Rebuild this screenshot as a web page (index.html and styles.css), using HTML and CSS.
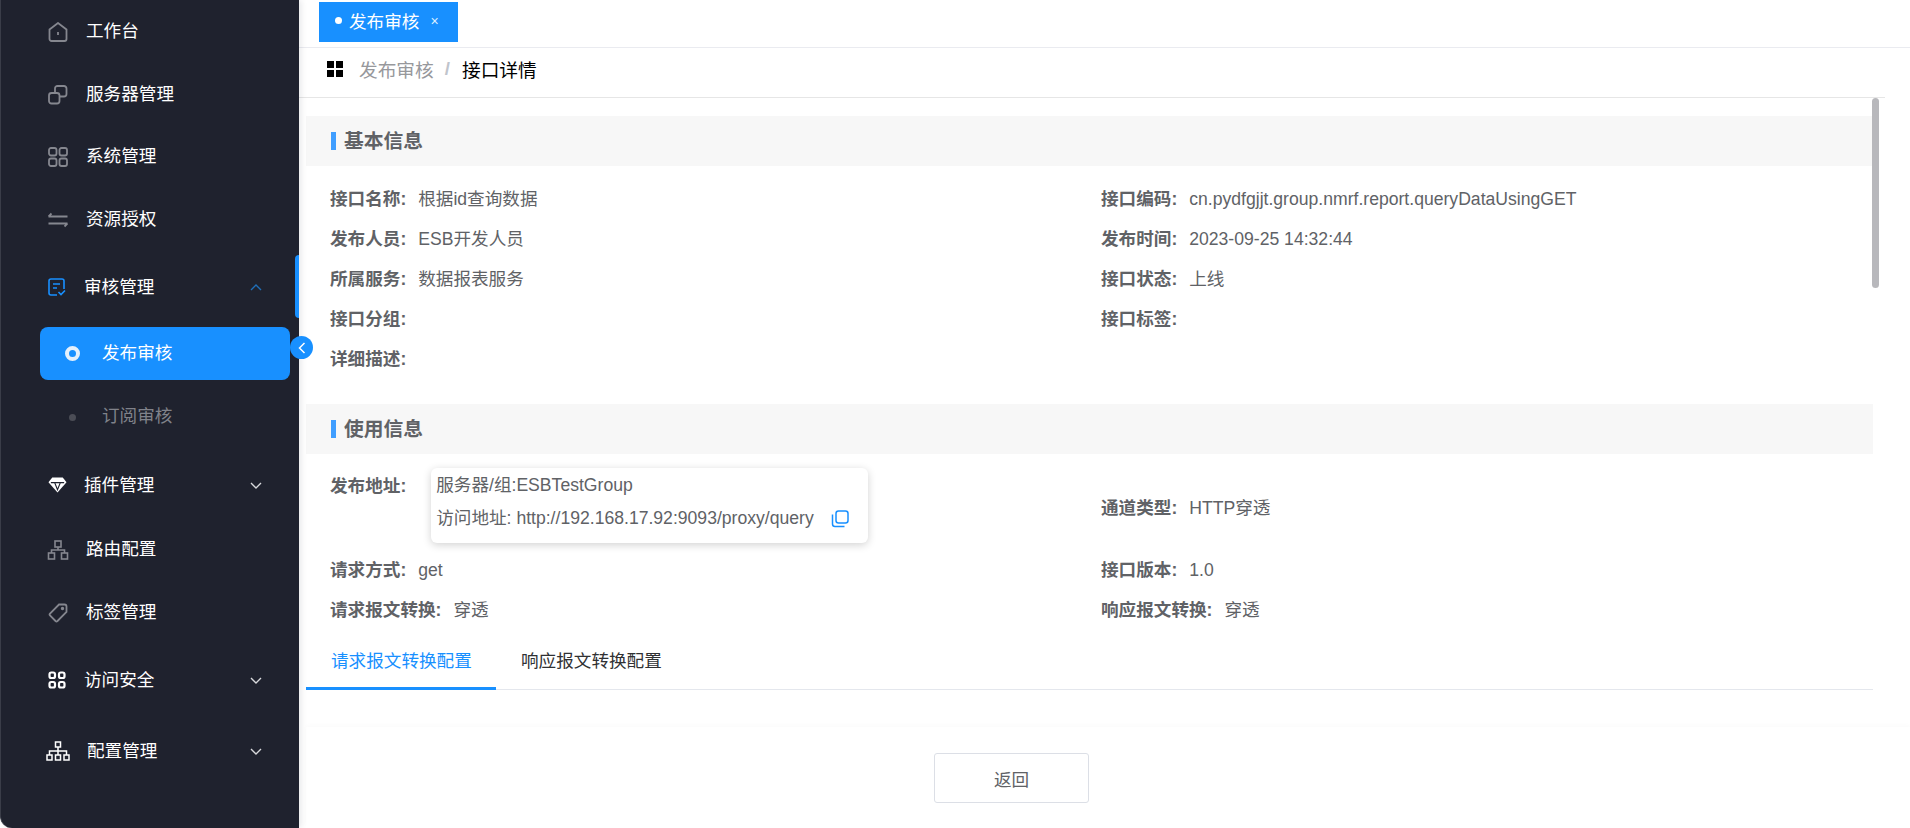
FILE: index.html
```html
<!DOCTYPE html>
<html lang="zh-CN">
<head>
    <meta charset="UTF-8">
    <meta name="viewport" content="width=device-width, initial-scale=1.0">
    <title>接口详情</title>
    <link rel="stylesheet" href="styles.css">
</head>
<body>
    <aside class="sidebar">
        <a class="menu-item">
            <svg class="menu-icon" viewBox="0 0 20 20"><path d="M1.500 7.500 10 1l8.500 6.500V17a2 2 0 0 1-2 2h-13a2 2 0 0 1-2-2z"/><path d="M10 10v3"/></svg>
            <span>工作台</span>
        </a>
        <a class="menu-item">
            <svg class="menu-icon" viewBox="0 0 20 20"><rect x="1" y="8" width="10.500" height="10.500" rx="2.500"/><path d="M7 8V3.500A2.500 2.500 0 0 1 9.500 1H16a2.500 2.500 0 0 1 2.500 2.500V9a2.500 2.500 0 0 1-2.500 2.500h-4.500"/></svg>
            <span>服务器管理</span>
        </a>
        <a class="menu-item">
            <svg class="menu-icon" viewBox="0 0 20 20"><rect x="1" y="1" width="7.500" height="7.500" rx="2"/><rect x="11.500" y="1" width="7.500" height="7.500" rx="2"/><rect x="1" y="11.500" width="7.500" height="7.500" rx="2"/><rect x="11.500" y="11.500" width="7.500" height="7.500" rx="2"/></svg>
            <span>系统管理</span>
        </a>
        <a class="menu-item">
            <svg class="menu-icon" viewBox="0 0 20 20"><path d="M.5 6.500h19M.5 6.500 3.500 3.500M19.500 13.500H.5M19.500 13.500l-3 3"/></svg>
            <span>资源授权</span>
        </a>

        <div class="menu-group menu-group-open">
            <svg class="menu-icon icon-blue" viewBox="0 0 18 18"><path d="M9 17H3a2 2 0 0 1-2-2V3a2 2 0 0 1 2-2h11a2 2 0 0 1 2 2v8"/><path d="M5 6h7M5 10h4M10.500 14l2.500 2.500 4-4"/></svg>
            <span>审核管理</span>
            <svg class="chevron chevron-up" viewBox="0 0 12 7"><path d="M1 6 6 1l5 5"/></svg>
        </div>
        <div class="submenu">
            <a class="submenu-item submenu-active"><i class="ring"></i><span>发布审核</span></a>
            <a class="submenu-item"><i class="dot"></i><span>订阅审核</span></a>
        </div>

        <div class="menu-group">
            <svg class="menu-icon icon-solid" viewBox="0 0 20 18"><path d="M4.500 1h11L19.500 6 10 17 .5 6z"/><path class="cut" d="M3 6.500h14M7 6.500 10 14l3-7.500"/></svg>
            <span>插件管理</span>
            <svg class="chevron" viewBox="0 0 12 7"><path d="M1 1l5 5 5-5"/></svg>
        </div>

        <a class="menu-item">
            <svg class="menu-icon icon-wide" viewBox="0 0 22 20"><rect x="8" y="1" width="6" height="6"/><rect x="1.500" y="13" width="6" height="6"/><rect x="14.500" y="13" width="6" height="6"/><path d="M11 7v3M4.500 13v-3h13v3"/></svg>
            <span>路由配置</span>
        </a>
        <a class="menu-item">
            <svg class="menu-icon" viewBox="0 0 20 20"><path d="M11 1.500h5.500a2 2 0 0 1 2 2V9L9.500 18a1.500 1.500 0 0 1-2 0L2 12.500a1.500 1.500 0 0 1 0-2z"/><circle cx="14.500" cy="5.500" r=".8"/></svg>
            <span>标签管理</span>
        </a>

        <div class="menu-group">
            <svg class="menu-icon icon-white" viewBox="0 0 18 18"><rect x="1.500" y="1.500" width="5.500" height="5.500" rx="1.800"/><rect x="11" y="1.500" width="5.500" height="5.500" rx="1.800"/><rect x="1.500" y="11" width="5.500" height="5.500" rx="1.800"/><rect x="11" y="11" width="5.500" height="5.500" rx="1.800"/></svg>
            <span>访问安全</span>
            <svg class="chevron" viewBox="0 0 12 7"><path d="M1 1l5 5 5-5"/></svg>
        </div>
        <div class="menu-group">
            <svg class="menu-icon icon-white icon-tree" viewBox="0 0 24 20"><rect x="9.500" y="1" width="5" height="5"/><rect x="1" y="14" width="5" height="5"/><rect x="9.500" y="14" width="5" height="5"/><rect x="18" y="14" width="5" height="5"/><path d="M12 6v8M3.500 14v-4h17v4"/></svg>
            <span class="tree-label">配置管理</span>
            <svg class="chevron" viewBox="0 0 12 7"><path d="M1 1l5 5 5-5"/></svg>
        </div>

        <div class="active-bar"></div>
        <div class="collapse-btn">
            <svg viewBox="0 0 8 12"><path d="M6.500 1 1.500 6l5 5"/></svg>
        </div>
    </aside>

    <main class="main">
        <div class="tags-bar">
            <span class="tag"><i class="tag-dot"></i>发布审核<span class="tag-close">×</span></span>
        </div>
        <div class="breadcrumb">
            <svg class="crumb-icon" viewBox="0 0 16 16"><rect width="7" height="7"/><rect x="9" width="7" height="7"/><rect y="9" width="7" height="7"/><rect x="9" y="9" width="7" height="7"/></svg>
            <span class="crumb-link">发布审核</span>
            <span class="crumb-sep">/</span>
            <span class="crumb-current">接口详情</span>
        </div>

        <div class="content">
            <div class="scroll-thumb"></div>

            <h3 class="section-title"><span>基本信息</span></h3>
            <div class="info-grid">
                <div class="info-row"><b>接口名称:</b><span>根据id查询数据</span></div>
                <div class="info-row"><b>接口编码:</b><span>cn.pydfgjjt.group.nmrf.report.queryDataUsingGET</span></div>
                <div class="info-row"><b>发布人员:</b><span>ESB开发人员</span></div>
                <div class="info-row"><b>发布时间:</b><span>2023-09-25 14:32:44</span></div>
                <div class="info-row"><b>所属服务:</b><span>数据报表服务</span></div>
                <div class="info-row"><b>接口状态:</b><span>上线</span></div>
                <div class="info-row"><b>接口分组:</b></div>
                <div class="info-row"><b>接口标签:</b></div>
                <div class="info-row"><b>详细描述:</b></div>
            </div>

            <h3 class="section-title section-second"><span>使用信息</span></h3>
            <div class="info-grid info-grid-use">
                <div class="info-row info-row-address">
                    <b>发布地址:</b>
                    <div class="address-card">
                        <div class="address-line">服务器/组:ESBTestGroup</div>
                        <div class="address-line"><span>访问地址: http://192.168.17.92:9093/proxy/query</span><svg class="copy-icon" viewBox="0 0 18 18"><rect x="5" y="1" width="12" height="12" rx="2.500"/><path d="M1.500 4.500V14A2.500 2.500 0 0 0 4 16.500h9.500"/></svg></div>
                    </div>
                </div>
                <div class="info-row info-row-middle"><b>通道类型:</b><span>HTTP穿透</span></div>
                <div class="info-row"><b>请求方式:</b><span>get</span></div>
                <div class="info-row"><b>接口版本:</b><span>1.0</span></div>
                <div class="info-row"><b>请求报文转换:</b><span>穿透</span></div>
                <div class="info-row"><b>响应报文转换:</b><span>穿透</span></div>
            </div>

            <div class="tabs">
                <span class="tab tab-active">请求报文转换配置</span>
                <span class="tab">响应报文转换配置</span>
            </div>
        </div>

        <div class="footer">
            <button class="back-btn">返回</button>
        </div>
    </main>
</body>
</html>
```

FILE: styles.css
```css
* {
    box-sizing: border-box;
}

html, body {
    height: 100%;
}

body {
    margin: 0;
    display: flex;
    overflow: hidden;
    background-color: #fff;
    font-family: "Liberation Sans", "Noto Sans CJK SC", sans-serif;
    font-size: 17.6px;
    color: #606266;
}

/* sidebar */
.sidebar {
    position: relative;
    flex: none;
    width: 299px;
    height: 100%;
    padding-top: 1px;
    background-color: #1f222e;
    border-left: 1px solid #3a3d48;
    border-bottom-left-radius: 12px;
    box-shadow: 2px 0 6px rgba(0, 21, 41, 0.1);
    color: #fff;
    z-index: 2;
}

.menu-item, .menu-group {
    display: flex;
    align-items: center;
    padding-left: 47px;
    padding-right: 37px;
}

.menu-item {
    height: 62.5px;
}

.menu-item span {
    margin-left: 18px;
    margin-bottom: 5px;
}

.menu-group {
    height: 66px;
    margin-top: 3px;
}

.menu-group span {
    margin-left: 17px;
    margin-top: 1.5px;
    line-height: 1;
}

.menu-group + .menu-group {
    margin-top: 5px;
}

.menu-group + .menu-item {
    margin-top: 1px;
}

.menu-item + .menu-group {
    margin-top: 3px;
}

.menu-icon {
    flex: none;
    width: 20px;
    height: 20px;
    fill: none;
    stroke: #85878f;
    stroke-width: 1.8;
}

.icon-blue {
    width: 18px;
    stroke: #1890ff;
    stroke-width: 1.6;
    margin-right: 1px;
}

.icon-solid {
    width: 19px;
    fill: #fff;
    stroke: none;
}

.icon-solid .cut {
    fill: none;
    stroke: #1f222e;
    stroke-width: 1.2;
}

.icon-wide {
    width: 22px;
    margin-left: -1px;
    margin-right: -1px;
    stroke-width: 1.6;
}

.icon-white {
    width: 18px;
    stroke: #fff;
    stroke-width: 2.2;
    margin-right: 1px;
}

.icon-tree {
    width: 24px;
    margin-left: -2px;
    margin-right: 0;
    stroke-width: 1.5;
}

.menu-group .tree-label {
    margin-left: 17px;
}

.chevron {
    flex: none;
    width: 12px;
    height: 7px;
    margin-left: auto;
    fill: none;
    stroke: #d8d9dc;
    stroke-width: 1.4;
}

.chevron-up {
    stroke: #1f6fb8;
}

.submenu {
    display: flex;
    flex-direction: column;
    gap: 10.5px;
    margin: 7px 9px 8.500px 39px;
    color: #80828a;
}

.submenu-item {
    display: flex;
    align-items: center;
    height: 53px;
    padding-left: 25px;
    border-radius: 8px;
}

.submenu-item span {
    margin-left: 21px;
    margin-bottom: 5px;
}

.submenu-active {
    background-color: #1890ff;
    color: #fff;
}

.ring {
    width: 15px;
    height: 15px;
    margin-right: 1px;
    border: 4.500px solid #e4f0fc;
    border-radius: 50%;
}

.dot {
    width: 7px;
    height: 7px;
    margin: 0 5px 0 4px;
    background-color: #4b4d56;
    border-radius: 50%;
}

.active-bar {
    position: absolute;
    top: 255px;
    right: 0;
    width: 4px;
    height: 63px;
    background-color: #1890ff;
    border-radius: 4px 0 0 4px;
}

.collapse-btn {
    position: absolute;
    top: 336px;
    right: -14px;
    display: flex;
    align-items: center;
    justify-content: center;
    width: 23px;
    height: 23px;
    background-color: #1890ff;
    border-radius: 50%;
}

.collapse-btn svg {
    width: 8px;
    height: 12px;
    fill: none;
    stroke: #fff;
    stroke-width: 1.5;
}

/* main */
.main {
    flex: 1;
    min-width: 0;
    display: flex;
    flex-direction: column;
    height: 100%;
}

.tags-bar {
    flex: none;
    height: 48px;
    padding: 2px 0 0 20px;
    border-bottom: 1px solid #eaebf0;
}

.tag {
    display: inline-flex;
    align-items: center;
    width: 139px;
    height: 40px;
    padding-left: 16px;
    padding-bottom: 3px;
    background-color: #1890ff;
    color: #fff;
}

.tag-dot {
    width: 7px;
    height: 7px;
    margin-right: 7px;
    background-color: #fff;
    border-radius: 50%;
}

.tag-close {
    margin-left: 11px;
    font-size: 14px;
    color: #dceeff;
}

.breadcrumb {
    flex: none;
    display: flex;
    align-items: center;
    height: 50px;
    margin-right: 25px;
    padding-left: 28px;
    padding-bottom: 8px;
    border-bottom: 1px solid #e6e6e6;
    font-size: 18.7px;
}

.crumb-icon {
    width: 16px;
    height: 16px;
    margin-right: 16px;
    fill: #000;
}

.crumb-link {
    color: #97989c;
}

.crumb-sep {
    margin: 0 12px 0 11px;
    color: #c0c4cc;
    font-weight: 700;
}

.crumb-current {
    color: #000;
}

.content {
    position: relative;
    flex: 1;
    min-height: 0;
    overflow: hidden;
    padding: 18px 37px 0 7px;
}

.scroll-thumb {
    position: absolute;
    top: 0;
    right: 31px;
    width: 7px;
    height: 190px;
    background-color: #b8b8bc;
    border-radius: 4px;
}

.section-title {
    display: flex;
    align-items: center;
    height: 50px;
    margin: 0;
    padding-left: 25px;
    background-color: #f7f7f7;
    font-size: 19.8px;
    font-weight: 700;
    color: #606266;
}

.section-title span {
    padding-left: 8px;
    line-height: 18px;
    border-left: 5px solid #409eff;
}

.section-second {
    margin-top: 25px;
}

.info-grid {
    display: grid;
    grid-template-columns: 771px 1fr;
    grid-auto-rows: 40px;
    padding: 13px 0 0 24px;
}

.info-grid-use {
    grid-template-rows: 92px 40px 40px;
    padding-top: 4px;
}

.info-row {
    display: flex;
    align-items: baseline;
    line-height: 41px;
}

.info-row b {
    flex: none;
    margin-right: 12px;
    font-weight: 700;
}

.info-row-middle {
    padding-top: 30px;
}

.info-row-address {
    align-items: flex-start;
}

.info-row-address b {
    margin-top: 8px;
    margin-right: 25px;
}

.address-card {
    width: 437px;
    height: 75px;
    margin-top: 10px;
    padding: 1px 0 0 5px;
    border-radius: 6px;
    box-shadow: 0 2px 8px rgba(0, 0, 0, 0.18);
}

.address-line {
    display: flex;
    align-items: center;
    height: 33px;
    line-height: 33px;
    white-space: nowrap;
}

.copy-icon {
    flex: none;
    width: 18px;
    height: 18px;
    margin-left: 17px;
    fill: none;
    stroke: #1890ff;
    stroke-width: 1.5;
}

.tabs {
    display: flex;
    height: 58px;
    margin-top: 2px;
    border-bottom: 1px solid #e4e7ed;
}

.tab {
    position: relative;
    padding: 0 25px;
    line-height: 59px;
    white-space: nowrap;
    color: #303133;
}

.tab-active {
    width: 190px;
    color: #1890ff;
}

.tab-active::after {
    content: "";
    position: absolute;
    left: 0;
    right: 0;
    bottom: -1px;
    height: 3px;
    background-color: #1890ff;
}

.footer {
    flex: none;
    height: 101px;
    padding: 26px 0 0 628px;
    margin-left: 7px;
    box-shadow: 0 -2px 4px rgba(0, 0, 0, 0.02);
}

.back-btn {
    width: 155px;
    height: 50px;
    padding: 0;
    background-color: #fff;
    border: 1px solid #dcdfe6;
    border-radius: 3px;
    font-family: inherit;
    font-size: 17.6px;
    color: #606266;
}
```
